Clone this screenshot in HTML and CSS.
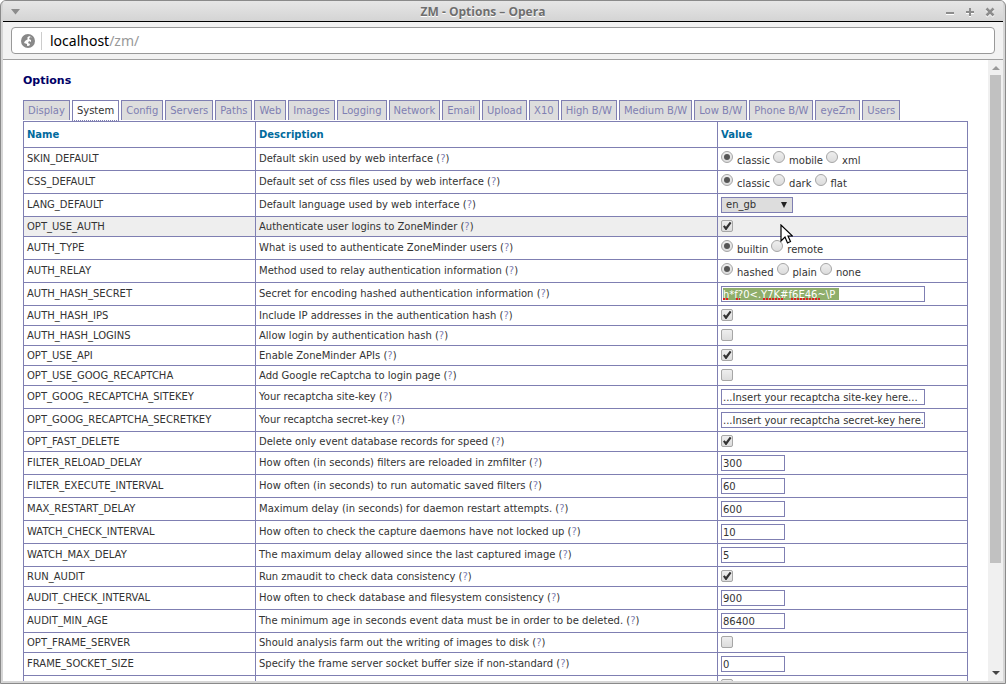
FILE: index.html
```
<!DOCTYPE html>
<html lang="en">
<head>
    <meta charset="UTF-8">
    <meta name="viewport" content="width=device-width, initial-scale=1.0">
    <title>ZM - Options</title>
    <link rel="stylesheet" href="styles.css">
</head>
<body>
<div class="window">
    <header class="titlebar">
        <svg class="menu-icon" width="10" height="6" viewBox="0 0 10 6"><path d="M0 0h9L4.500 5.500z" fill="#8c8c8c"/></svg>
        <span class="title">ZM - Options – Opera</span>
        <svg class="window-buttons" width="52" height="12" viewBox="0 0 52 12">
            <g fill="none" stroke="#fff" stroke-width="2" transform="translate(0 1)"><path d="M1 7h8M21 6h8M25 2v8"/><path d="M41.500 2.500l7 7M48.500 2.500l-7 7" stroke-width="2.500"/></g>
            <g fill="none" stroke="#8c8c8c" stroke-width="2"><path d="M1 7h8M21 6h8M25 2v8"/><path d="M41.500 2.500l7 7M48.500 2.500l-7 7" stroke-width="2.500"/></g>
        </svg>
    </header>

    <div class="toolbar">
        <div class="address">
            <svg class="globe" width="14" height="14" viewBox="0 0 14 14">
                <circle cx="7" cy="7" r="6" fill="#fff" stroke="#888" stroke-width="2"/>
                <path d="M1 5l2-3 4-1 1 1-2 2 1 1-3 2-1 2 3 1v3L4 12 1 8zM9 3l3 1 1 4-3 4-2 1 1-3-2-1 1-2 2 1V6L8 5z" fill="#888"/>
            </svg>
            <span class="url"><b>localhost</b>/zm/</span>
        </div>
    </div>

    <div class="viewport">
        <main class="page">
            <h2>Options</h2>
            <ul class="tabs">
                <li><a href="#">Display</a></li>
                <li class="active"><a href="#">System</a></li>
                <li><a href="#">Config</a></li>
                <li><a href="#">Servers</a></li>
                <li><a href="#">Paths</a></li>
                <li><a href="#">Web</a></li>
                <li><a href="#">Images</a></li>
                <li><a href="#">Logging</a></li>
                <li><a href="#">Network</a></li>
                <li><a href="#">Email</a></li>
                <li><a href="#">Upload</a></li>
                <li><a href="#">X10</a></li>
                <li><a href="#">High B/W</a></li>
                <li><a href="#">Medium B/W</a></li>
                <li><a href="#">Low B/W</a></li>
                <li><a href="#">Phone B/W</a></li>
                <li><a href="#">eyeZm</a></li>
                <li><a href="#">Users</a></li>
            </ul>

            <form>
            <table class="options">
                <colgroup><col class="col-name"><col class="col-desc"><col class="col-value"></colgroup>
                <thead>
                    <tr><th>Name</th><th>Description</th><th>Value</th></tr>
                </thead>
                <tbody>
                    <tr>
                        <td>SKIN_DEFAULT</td>
                        <td>Default skin used by web interface (<a href="#">?</a>)</td>
                        <td><div class="radios"><label><input type="radio" name="skin" checked>classic</label><label><input type="radio" name="skin">mobile</label><label><input type="radio" name="skin">xml</label></div></td>
                    </tr>
                    <tr>
                        <td>CSS_DEFAULT</td>
                        <td>Default set of css files used by web interface (<a href="#">?</a>)</td>
                        <td><div class="radios"><label><input type="radio" name="css" checked>classic</label><label><input type="radio" name="css">dark</label><label><input type="radio" name="css">flat</label></div></td>
                    </tr>
                    <tr>
                        <td><label for="lang">LANG_DEFAULT</label></td>
                        <td>Default language used by web interface (<a href="#">?</a>)</td>
                        <td><div class="select"><select id="lang"><option>en_gb</option></select></div></td>
                    </tr>
                    <tr class="hover">
                        <td><label for="use-auth">OPT_USE_AUTH</label></td>
                        <td>Authenticate user logins to ZoneMinder (<a href="#">?</a>)</td>
                        <td><div class="pointer-spot"><input type="checkbox" id="use-auth" checked>
                            <svg class="pointer" width="13" height="20" viewBox="0 0 13 20"><path d="M1 1v16l4-4 2.500 6 3-1.500L8 12h4.500z" fill="#fff" stroke="#000" stroke-width="1.200"/></svg></div></td>
                    </tr>
                    <tr>
                        <td>AUTH_TYPE</td>
                        <td>What is used to authenticate ZoneMinder users (<a href="#">?</a>)</td>
                        <td><div class="radios"><label><input type="radio" name="type" checked>builtin</label><label><input type="radio" name="type">remote</label></div></td>
                    </tr>
                    <tr>
                        <td>AUTH_RELAY</td>
                        <td>Method used to relay authentication information (<a href="#">?</a>)</td>
                        <td><div class="radios"><label><input type="radio" name="relay" checked>hashed</label><label><input type="radio" name="relay">plain</label><label><input type="radio" name="relay">none</label></div></td>
                    </tr>
                    <tr>
                        <td><label for="secret">AUTH_HASH_SECRET</label></td>
                        <td>Secret for encoding hashed authentication information (<a href="#">?</a>)</td>
                        <td><input type="text" class="long selected" id="secret" value="h*f?0&lt;.Y7K#f6E46~\P"></td>
                    </tr>
                    <tr>
                        <td><label for="hash-ips">AUTH_HASH_IPS</label></td>
                        <td>Include IP addresses in the authentication hash (<a href="#">?</a>)</td>
                        <td><input type="checkbox" id="hash-ips" checked></td>
                    </tr>
                    <tr>
                        <td><label for="hash-logins">AUTH_HASH_LOGINS</label></td>
                        <td>Allow login by authentication hash (<a href="#">?</a>)</td>
                        <td><input type="checkbox" id="hash-logins"></td>
                    </tr>
                    <tr>
                        <td><label for="use-api">OPT_USE_API</label></td>
                        <td>Enable ZoneMinder APIs (<a href="#">?</a>)</td>
                        <td><input type="checkbox" id="use-api" checked></td>
                    </tr>
                    <tr>
                        <td><label for="recaptcha">OPT_USE_GOOG_RECAPTCHA</label></td>
                        <td>Add Google reCaptcha to login page (<a href="#">?</a>)</td>
                        <td><input type="checkbox" id="recaptcha"></td>
                    </tr>
                    <tr>
                        <td><label for="sitekey">OPT_GOOG_RECAPTCHA_SITEKEY</label></td>
                        <td>Your recaptcha site-key (<a href="#">?</a>)</td>
                        <td><input type="text" class="long" id="sitekey" value="...Insert your recaptcha site-key here..."></td>
                    </tr>
                    <tr>
                        <td><label for="secretkey">OPT_GOOG_RECAPTCHA_SECRETKEY</label></td>
                        <td>Your recaptcha secret-key (<a href="#">?</a>)</td>
                        <td><input type="text" class="long" id="secretkey" value="...Insert your recaptcha secret-key here..."></td>
                    </tr>
                    <tr>
                        <td><label for="fast-delete">OPT_FAST_DELETE</label></td>
                        <td>Delete only event database records for speed (<a href="#">?</a>)</td>
                        <td><input type="checkbox" id="fast-delete" checked></td>
                    </tr>
                    <tr>
                        <td><label for="reload-delay">FILTER_RELOAD_DELAY</label></td>
                        <td>How often (in seconds) filters are reloaded in zmfilter (<a href="#">?</a>)</td>
                        <td><input type="text" id="reload-delay" value="300"></td>
                    </tr>
                    <tr>
                        <td><label for="execute-interval">FILTER_EXECUTE_INTERVAL</label></td>
                        <td>How often (in seconds) to run automatic saved filters (<a href="#">?</a>)</td>
                        <td><input type="text" id="execute-interval" value="60"></td>
                    </tr>
                    <tr>
                        <td><label for="restart-delay">MAX_RESTART_DELAY</label></td>
                        <td>Maximum delay (in seconds) for daemon restart attempts. (<a href="#">?</a>)</td>
                        <td><input type="text" id="restart-delay" value="600"></td>
                    </tr>
                    <tr>
                        <td><label for="check-interval">WATCH_CHECK_INTERVAL</label></td>
                        <td>How often to check the capture daemons have not locked up (<a href="#">?</a>)</td>
                        <td><input type="text" id="check-interval" value="10"></td>
                    </tr>
                    <tr>
                        <td><label for="max-delay">WATCH_MAX_DELAY</label></td>
                        <td>The maximum delay allowed since the last captured image (<a href="#">?</a>)</td>
                        <td><input type="text" id="max-delay" value="5"></td>
                    </tr>
                    <tr>
                        <td><label for="run-audit">RUN_AUDIT</label></td>
                        <td>Run zmaudit to check data consistency (<a href="#">?</a>)</td>
                        <td><input type="checkbox" id="run-audit" checked></td>
                    </tr>
                    <tr>
                        <td><label for="audit-interval">AUDIT_CHECK_INTERVAL</label></td>
                        <td>How often to check database and filesystem consistency (<a href="#">?</a>)</td>
                        <td><input type="text" id="audit-interval" value="900"></td>
                    </tr>
                    <tr>
                        <td><label for="audit-age">AUDIT_MIN_AGE</label></td>
                        <td>The minimum age in seconds event data must be in order to be deleted. (<a href="#">?</a>)</td>
                        <td><input type="text" id="audit-age" value="86400"></td>
                    </tr>
                    <tr>
                        <td><label for="frame-server">OPT_FRAME_SERVER</label></td>
                        <td>Should analysis farm out the writing of images to disk (<a href="#">?</a>)</td>
                        <td><input type="checkbox" id="frame-server"></td>
                    </tr>
                    <tr>
                        <td><label for="socket-size">FRAME_SOCKET_SIZE</label></td>
                        <td>Specify the frame server socket buffer size if non-standard (<a href="#">?</a>)</td>
                        <td><input type="text" id="socket-size" value="0"></td>
                    </tr>
                    <tr>
                        <td></td>
                        <td></td>
                        <td><input type="checkbox"></td>
                    </tr>
                </tbody>
            </table>
            </form>
        </main>

        <div class="scrollbar">
            <svg width="8" height="4" viewBox="0 0 8 4"><path d="M0 4h8L4 0z" fill="#9a9a9a"/></svg>
            <div class="track"><div class="thumb"></div></div>
            <svg width="8" height="4" viewBox="0 0 8 4"><path d="M0 0h8L4 4z" fill="#444"/></svg>
        </div>
    </div>
</div>
</body>
</html>
```
FILE: styles.css
```
* {
    box-sizing: border-box;
}
body {
    margin: 0;
    background: #fff;
    font-family: "DejaVu Sans", sans-serif;
    font-size: 10px;
    line-height: 12px;
    color: #333;
}

/* Window frame */
.window {
    display: flex;
    flex-direction: column;
    height: 100vh;
    padding: 0 2px 2px;
    background: #d6d6d6;
    border: 1px solid #8a8a8a;
    border-radius: 6px 6px 0 0;
    overflow: hidden;
}
.titlebar {
    display: flex;
    align-items: center;
    flex: none;
    height: 21px;
    padding: 2px 6px 0 8px;
    background: linear-gradient(#e6e6e6, #d4d4d4);
    border-bottom: 1px solid #000;
}
.title {
    flex: 1;
    text-align: center;
    font: bold 12px/18px "Open Sans", "Noto Sans", sans-serif;
    color: #6e6e6e;
    text-shadow: 0 1px 0 #fff;
}
.window-buttons {
    display: block;
}
.toolbar {
    flex: none;
    padding: 5px 8px;
    background: #f2f2f2;
    border-bottom: 1px solid #a0a0a0;
}
.address {
    display: flex;
    align-items: center;
    height: 27px;
    padding-left: 9px;
    background: #fff;
    border: 1px solid #999;
    border-radius: 4px;
}
.url {
    margin-left: 6px;
    padding-left: 8px;
    border-left: 1px solid #ccc;
    font: 14px/18px "Noto Sans", sans-serif;
    color: #999;
}
.url b {
    font-weight: normal;
    color: #000;
}
.viewport {
    display: flex;
    flex: 1;
    min-height: 0;
    background: #fff;
}

/* Options page */
.page {
    flex: 1;
    padding: 14px 20px 0;
    overflow: hidden;
}
h2 {
    margin: 0;
    font-size: 11px;
    line-height: 14px;
    color: #000066;
}
a {
    color: #7f7fb2;
    text-decoration: none;
}
.tabs {
    display: flex;
    gap: 2px;
    margin: 12px 0 1px;
    padding: 0;
    list-style: none;
}
.tabs li {
    height: 20px;
    padding: 4px;
    background: #ddd;
    border: 1px solid #7f7fb2;
    border-bottom: 0;
    white-space: nowrap;
}
.tabs .active {
    height: 21px;
    margin-bottom: -1px;
    background: #fff;
    border-bottom: 1px dotted #7f7fb2;
}
.tabs .active a {
    color: #333;
}
.options {
    width: 100%;
    table-layout: fixed;
    border-collapse: collapse;
}
.col-name {
    width: 232px;
}
.col-value {
    width: 250px;
}
th, td {
    height: 20px;
    padding: 3px;
    border: 1px solid #7f7fb2;
    text-align: left;
    vertical-align: middle;
}
th {
    height: 26px;
    color: #016a9d;
}
.hover td {
    background: #eee;
}

/* Controls */
input, select {
    display: block;
    margin: 0;
    appearance: none;
    border: 1px solid #7f7fb2;
    border-radius: 0;
    font: 10px/12px "DejaVu Sans", sans-serif;
    color: #333;
}
input[type="text"] {
    width: 64px;
    height: 16px;
    padding: 1px;
    background-color: #fff;
}
input.long {
    width: 204px;
}
/* highlighted text with spelling marks below it */
input.selected {
    color: #fff;
    background-image:
        repeating-linear-gradient(90deg, #e02020 0 2px, transparent 2px 3px),
        repeating-linear-gradient(90deg, #e02020 0 2px, transparent 2px 3px),
        repeating-linear-gradient(90deg, #e02020 0 2px, transparent 2px 3px),
        repeating-linear-gradient(90deg, #e02020 0 2px, transparent 2px 3px),
        linear-gradient(#8fae6b, #8fae6b);
    background-repeat: no-repeat;
    background-position: 1px 11px, 14px 11px, 41px 11px, 69px 11px, 1px 1px;
    background-size: 6px 2px, 4px 2px, 20px 2px, 29px 2px, 116px 12px;
}
input[type="checkbox"], input[type="radio"] {
    width: 12px;
    height: 12px;
    background: linear-gradient(#eee, #dcdcdc);
    border: 1px solid #a6a6a6;
    border-radius: 2px;
}
input[type="checkbox"] {
    margin-bottom: 1px;
}
input[type="radio"] {
    border-radius: 50%;
}
input[type="checkbox"]:checked::before {
    content: "";
    display: block;
    width: 10px;
    height: 10px;
    background: #333;
    clip-path: polygon(10% 55%, 25% 42%, 40% 58%, 78% 8%, 95% 20%, 45% 90%, 35% 90%);
}
input[type="radio"]:checked::before {
    content: "";
    display: block;
    width: 6px;
    height: 6px;
    margin: 2px;
    background: #555;
    border-radius: 50%;
}
.radios {
    display: flex;
    gap: 3px;
    height: 16px;
}
.radios label {
    display: flex;
    gap: 4px;
    padding-top: 4px;
}
.radios input {
    margin-top: -4px;
}
.select {
    position: relative;
    width: 72px;
}
.select select {
    width: 72px;
    height: 16px;
    padding: 0 4px;
    background: #ddd;
}
.select::after {
    content: "";
    position: absolute;
    top: 5px;
    right: 6px;
    border: 3px solid transparent;
    border-top: 6px solid #222;
    border-bottom: 0;
}
.pointer-spot {
    position: relative;
}
.pointer {
    position: absolute;
    top: 4px;
    left: 59px;
    z-index: 1;
}

/* Scrollbar */
.scrollbar {
    display: flex;
    flex-direction: column;
    align-items: center;
    flex: none;
    width: 15px;
    padding: 6px 0;
    background: #f0f0f0;
}
.track {
    flex: 1;
    width: 11px;
    padding: 5px 0;
}
.thumb {
    height: 82.5%;
    background: #c1c1c1;
}
```
